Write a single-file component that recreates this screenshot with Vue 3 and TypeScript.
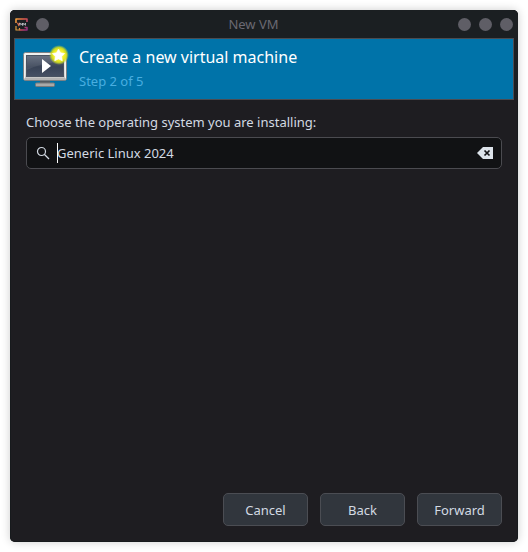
<script setup lang="ts">
import { ref } from 'vue'

const step = ref(2)
const totalSteps = 5
const osName = ref('Generic Linux 2024')
const actions: string[] = ['Cancel', 'Back', 'Forward']
const windowControls: string[] = ['Minimize', 'Maximize', 'Close']
</script>

<template>
  <main class="window">
    <header class="titlebar">
      <div class="side">
        <svg class="app-icon" viewBox="0 0 13 13" aria-hidden="true">
          <defs>
            <linearGradient id="logo" gradientUnits="userSpaceOnUse" x1="0" y1="3" x2="13" y2="10">
              <stop offset="0" stop-color="#f0a03c" />
              <stop offset="0.5" stop-color="#e0584e" />
              <stop offset="1" stop-color="#8e2d80" />
            </linearGradient>
          </defs>
          <path d="M12 4V1H1V5" fill="none" stroke="url(#logo)" stroke-width="1.6" stroke-linejoin="round" />
          <path d="M1 8V12H4.5V10" fill="none" stroke="#dc9c3c" stroke-width="1.2" stroke-linejoin="round" />
          <path d="M4.5 12H12V9.5H9.500" fill="none" stroke="url(#logo)" stroke-width="1.6" stroke-linejoin="round" />
          <path d="M2.500 4.800l1.200 2.400L4.900 4.800" fill="none" stroke="#e0704e" stroke-width="1.2" />
          <path d="M4.900 7.600V5l1.300 1.800L7.500 5v2.600M7.900 7.600V5l1.300 1.800L10.500 5v2.600" fill="none" stroke="#c4c4cc" stroke-width="0.8" />
        </svg>
        <button class="dot" type="button" aria-label="Keep above"></button>
      </div>
      <h1 class="caption">New VM</h1>
      <div class="side">
        <button v-for="name in windowControls" :key="name" class="dot" type="button" :aria-label="name"></button>
      </div>
    </header>

    <section class="banner">
      <svg class="monitor" viewBox="1 2 48 48" aria-hidden="true">
        <defs>
          <linearGradient id="bezel" x1="0" y1="0" x2="0" y2="1">
            <stop offset="0" stop-color="#f4f4f3" />
            <stop offset="0.8" stop-color="#d9d9d8" />
            <stop offset="1" stop-color="#b3b3b3" />
          </linearGradient>
          <linearGradient id="screen" x1="0" y1="0" x2="0" y2="1">
            <stop offset="0" stop-color="#5e6779" />
            <stop offset="0.55" stop-color="#394356" />
            <stop offset="1" stop-color="#465064" />
          </linearGradient>
          <radialGradient id="glow">
            <stop offset="0" stop-color="#fffb8a" />
            <stop offset="0.55" stop-color="#f0ee22" />
            <stop offset="0.75" stop-color="#d6e01e" stop-opacity="0.9" />
            <stop offset="1" stop-color="#b4d032" stop-opacity="0" />
          </radialGradient>
        </defs>
        <path d="M18 38h10v4H18z" fill="#555b61" />
        <rect x="13.5" y="41" width="19" height="3.5" rx="1" fill="#a9a9a8" stroke="#76797b" />
        <rect x="1.5" y="10.5" width="43" height="28" rx="2" fill="url(#bezel)" stroke="#7c8084" />
        <rect x="2.5" y="11.5" width="41" height="26" rx="1" fill="none" stroke="#f0f0ef" />
        <path d="M2.5 37h41" stroke="#b4b4b4" stroke-width="2" />
        <rect x="4.5" y="13.5" width="37" height="21" fill="url(#screen)" stroke="#4a5362" />
        <path d="M5 14h36v6Q22 20 5 28z" fill="#fff" opacity="0.08" />
        <path d="M20 17v14l9-7z" fill="#fff" />
        <circle cx="37" cy="13" r="10" fill="url(#glow)" />
        <path d="M36.500 7l2 3.800 4.200.7-3 3.100.6 4.200-3.800-1.900-3.800 1.900.6-4.200-3-3.100 4.200-.7z" fill="#fff" stroke="#fff" stroke-width="0.6" stroke-linejoin="round" />
      </svg>
      <div class="heading">
        <h2 class="title">Create a new virtual machine</h2>
        <p class="step">Step {{ step }} of {{ totalSteps }}</p>
      </div>
    </section>

    <form class="content" @submit.prevent>
      <label class="prompt" for="os">Choose the operating system you are installing:</label>
      <div class="entry">
        <svg class="search" viewBox="0 0 16 16" aria-hidden="true">
          <circle cx="6.500" cy="6.500" r="4" />
          <path d="M9.500 9.500l4.500 4.500" />
        </svg>
        <div class="text">
          <span class="caret"></span>
          <input id="os" v-model="osName" class="field" type="text" />
        </div>
        <button class="clear" type="button" aria-label="Clear" @click="osName = ''">
          <svg viewBox="0 0 16 12" aria-hidden="true">
            <path d="M0 6l6-6h10v12H6z" fill="#dce3ea" />
            <path d="M7.500 3.500l5 5M12.500 3.500l-5 5" stroke="#111214" stroke-width="1.700" />
          </svg>
        </button>
      </div>
      <footer class="actions">
        <button v-for="label in actions" :key="label" class="action" type="button">{{ label }}</button>
      </footer>
    </form>
  </main>
</template>

<style>
body {
  background: #fff;
}
</style>

<style scoped>
.window {
  box-sizing: border-box;
  display: flex;
  flex-direction: column;
  min-height: calc(100vh - 20px);
  margin: 10px;
  padding: 0 4px 4px;
  border-radius: 5px;
  background: #1e1d21;
  box-shadow: inset 0 0 0 1px #171a1d, 0 0 10px rgba(0, 0, 0, 0.2);
  color: #d3dae3;
  font: 13px/18px "Noto Sans", sans-serif;
}

.titlebar {
  display: flex;
  align-items: center;
  height: 28px;
  margin: 0 -4px;
  padding: 0 5px;
  border-radius: 5px 5px 0 0;
  background: #1b1f22;
}

.side {
  display: flex;
  align-items: center;
  gap: 8px;
}

.app-icon {
  width: 13px;
  height: 13px;
}

.dot {
  width: 13px;
  height: 13px;
  padding: 0;
  border: 0;
  border-radius: 50%;
  background: #5f5e66;
}

.caption {
  flex: 1;
  margin: 0;
  color: #6a6972;
  font-size: 13px;
  font-weight: 400;
  text-align: center;
}

.banner {
  display: flex;
  gap: 8px;
  box-sizing: border-box;
  height: 62px;
  padding: 5px 8px;
  border: 1px solid #4b4c52;
  background: #0073a9;
  box-shadow: -4px 0 #1b1f22, 4px 0 #1b1f22;
}

.monitor {
  width: 48px;
  height: 48px;
}

.heading {
  padding-top: 1px;
}

.title {
  margin: 0;
  color: #fff;
  font-size: 16px;
  font-weight: 400;
  line-height: 24px;
}

.step {
  margin: 3px 0 0;
  color: #49aee0;
}

.content {
  display: flex;
  flex: 1;
  flex-direction: column;
  padding: 13px 12px 12px;
}

.entry {
  display: flex;
  align-items: center;
  gap: 6px;
  box-sizing: border-box;
  height: 32px;
  margin-top: 6px;
  padding: 0 8px;
  border: 1px solid #4b4b50;
  border-radius: 5px;
  background: #111214;
}

.search {
  width: 16px;
  height: 16px;
  fill: none;
  stroke: #d3dae3;
  stroke-width: 1.2;
}

.text {
  position: relative;
  display: flex;
  flex: 1;
  align-items: center;
  height: 20px;
}

.caret {
  position: absolute;
  top: 0;
  bottom: 0;
  left: 0;
  width: 1px;
  background: #fff;
}

.field {
  flex: 1;
  min-width: 0;
  padding: 0;
  border: 0;
  outline: 0;
  background: none;
  color: #d3dae3;
  font: inherit;
}

.clear {
  display: flex;
  padding: 0;
  border: 0;
  background: none;
}

.clear svg {
  width: 16px;
  height: 12px;
}

.actions {
  display: flex;
  justify-content: flex-end;
  gap: 12px;
  margin-top: auto;
}

.action {
  box-sizing: border-box;
  width: 85px;
  height: 33px;
  padding: 0;
  border: 1px solid #4b4d53;
  border-radius: 5px;
  background: #31363d;
  color: #d3dae3;
  font: inherit;
}
</style>
